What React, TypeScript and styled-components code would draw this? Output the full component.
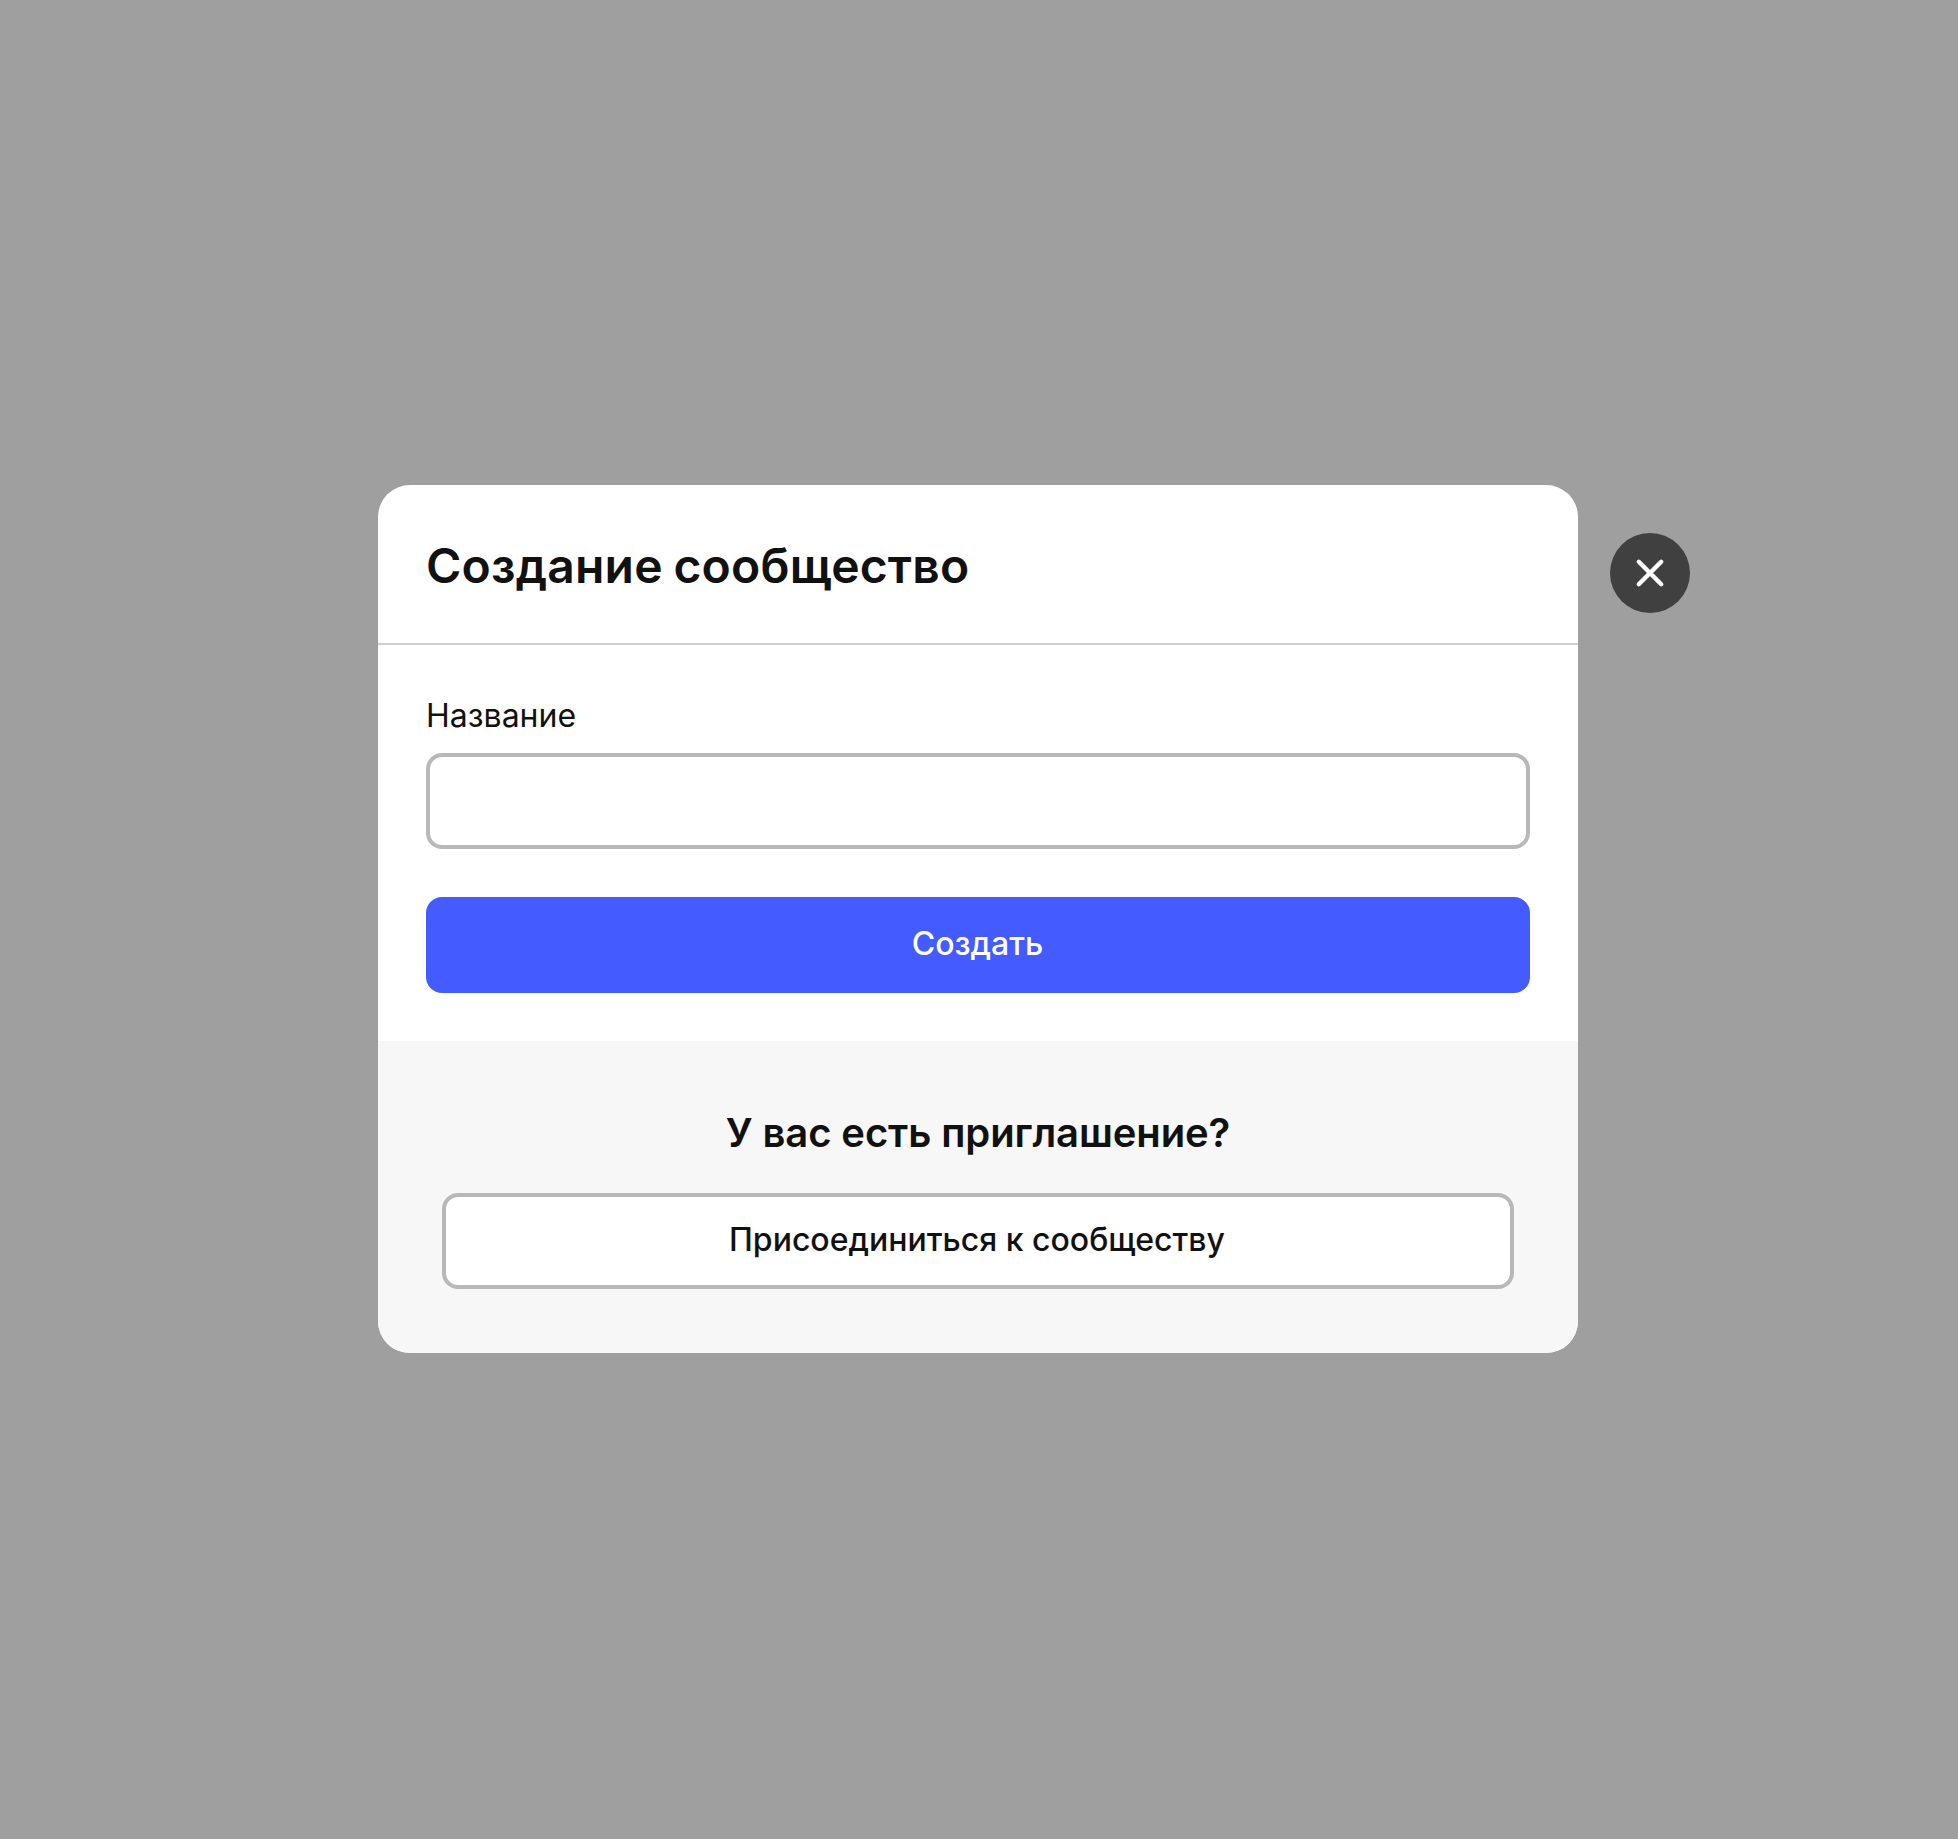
import React from "react";
import styled, { createGlobalStyle } from "styled-components";

const GlobalStyle = createGlobalStyle`
  *, *::before, *::after { box-sizing: border-box; }
  body {
    margin: 0;
    background: #9f9f9f;
    color: #111111;
    font-family: Inter, "Noto Sans", sans-serif;
  }
`;

const Overlay = styled.div`
  display: flex;
  align-items: flex-start;
  height: 1839px;
  padding: 485px 0 0 378px;
  background: #9f9f9f;
`;

const Dialog = styled.section`
  display: flex;
  flex-direction: column;
  flex: none;
  width: 1200px;
  border-radius: 32px;
  background: #ffffff;
  overflow: hidden;
`;

const Header = styled.header`
  height: 160px;
  padding: 48px 48px 0;
  border-bottom: 2px solid #cfcfcf;
`;

const Title = styled.h1`
  margin: 0;
  font-size: 48px;
  line-height: 66px;
  font-weight: 600;
  letter-spacing: 0.18px;
  word-spacing: -1.5px;
`;

const Form = styled.form`
  display: flex;
  flex-direction: column;
  gap: 48px;
  padding: 48px;
`;

const Field = styled.label`
  display: flex;
  flex-direction: column;
  gap: 14px;
  font-size: 32px;
  line-height: 46px;
`;

const Input = styled.input`
  width: 100%;
  height: 96px;
  padding: 0 28px;
  border: 4px solid #b8b8b8;
  border-radius: 16px;
  outline: none;
  background: #ffffff;
  font: inherit;
`;

const Button = styled.button<{ $primary?: boolean }>`
  display: flex;
  align-items: center;
  justify-content: center;
  width: 100%;
  height: 96px;
  padding: ${(p) => (p.$primary ? "0 1px 2px 0" : "0 2px 2px 0")};
  border: ${(p) => (p.$primary ? "none" : "4px solid #b8b8b8")};
  border-radius: 16px;
  background: ${(p) => (p.$primary ? "#445bff" : "#ffffff")};
  color: ${(p) => (p.$primary ? "#ffffff" : "#111111")};
  font-family: inherit;
  font-size: 32px;
  line-height: 44px;
  font-weight: 500;
`;

const Footer = styled.footer`
  display: flex;
  flex-direction: column;
  gap: 32px;
  padding: 64px;
  background: #f7f7f7;
`;

const Question = styled.h2`
  margin: 0;
  font-size: 40px;
  line-height: 56px;
  font-weight: 600;
  letter-spacing: -0.1px;
  text-align: center;
`;

const CloseButton = styled.button`
  display: flex;
  align-items: center;
  justify-content: center;
  flex: none;
  width: 80px;
  height: 80px;
  margin: 48px 0 0 32px;
  padding: 0;
  border: none;
  border-radius: 50%;
  background: #404040;
  color: #ffffff;
`;

const CloseIcon = () => (
  <svg width="32" height="32" viewBox="0 0 32 32" fill="none" stroke="currentColor" strokeWidth="4.4" strokeLinecap="round">
    <path d="M4.8 4.8 27.2 27.2M27.2 4.8 4.8 27.2" />
  </svg>
);

export default function App() {
  return (
    <>
      <GlobalStyle />
      <Overlay>
        <Dialog role="dialog">
          <Header>
            <Title>Создание сообщество</Title>
          </Header>
          <Form>
            <Field>
              Название
              <Input type="text" />
            </Field>
            <Button type="button" $primary>
              Создать
            </Button>
          </Form>
          <Footer>
            <Question>У вас есть приглашение?</Question>
            <Button type="button">Присоединиться к сообществу</Button>
          </Footer>
        </Dialog>
        <CloseButton type="button">
          <CloseIcon />
        </CloseButton>
      </Overlay>
    </>
  );
}
